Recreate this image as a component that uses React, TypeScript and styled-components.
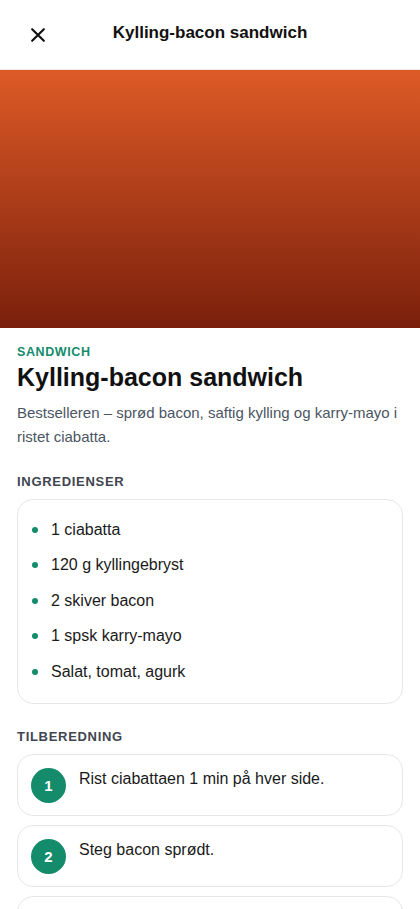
import styled, { createGlobalStyle } from 'styled-components';

const GlobalStyle = createGlobalStyle`
  * { box-sizing: border-box; }
  body {
    margin: 0;
    background: #ffffff;
    font-family: 'Liberation Sans', Arial, sans-serif;
    color: #111111;
  }
`;

const ingredients = [
  '1 ciabatta',
  '120 g kyllingebryst',
  '2 skiver bacon',
  '1 spsk karry-mayo',
  'Salat, tomat, agurk',
];

const steps = [
  'Rist ciabattaen 1 min på hver side.',
  'Steg bacon sprødt.',
  'Stek kyllingen gjennom.',
];

const App = () => {
  return (
    <Page>
      <GlobalStyle />
      <Header>
        <CloseButton aria-label='Lukk'>
          <svg width='20' height='20' viewBox='0 0 24 24' fill='none' stroke='#111' strokeWidth='2.6' strokeLinecap='round'>
            <path d='M5 5l14 14M19 5L5 19' />
          </svg>
        </CloseButton>
        <HeaderTitle>Kylling-bacon sandwich</HeaderTitle>
      </Header>
      <Hero />
      <Content>
        <Category>SANDWICH</Category>
        <Title>Kylling-bacon sandwich</Title>
        <Description>
          Bestselleren – sprød bacon, saftig kylling og karry-mayo i ristet ciabatta.
        </Description>

        <SectionLabel>INGREDIENSER</SectionLabel>
        <Card>
          <IngredientList>
            {ingredients.map((item) => (
              <Ingredient key={item}>
                <Bullet />
                <span>{item}</span>
              </Ingredient>
            ))}
          </IngredientList>
        </Card>

        <SectionLabel>TILBEREDNING</SectionLabel>
        <Steps>
          {steps.map((text, i) => (
            <StepCard key={text}>
              <StepNumber>{i + 1}</StepNumber>
              <StepText>{text}</StepText>
            </StepCard>
          ))}
        </Steps>
      </Content>
    </Page>
  );
};

export default App;

const Page = styled.div`
  width: 420px;
  height: 909px;
  overflow: hidden;
  background: #fff;
`;

const Header = styled.header`
  position: relative;
  height: 70px;
  display: flex;
  align-items: center;
  justify-content: center;
  border-bottom: 1px solid #ececec;
`;

const CloseButton = styled.button`
  position: absolute;
  left: 22px;
  top: 19px;
  width: 32px;
  height: 32px;
  padding: 0;
  border: none;
  background: none;
  display: flex;
  align-items: center;
  justify-content: center;
`;

const HeaderTitle = styled.h1`
  margin: 0 0 4px;
  font-size: 17px;
  font-weight: 700;
  color: #111;
`;

const Hero = styled.div`
  height: 258px;
  background: linear-gradient(180deg, #dd5a26 0%, #a73a18 55%, #7a1f0b 100%);
`;

const Content = styled.main`
  padding: 15px 17px 0 17px;
`;

const Category = styled.div`
  font-size: 12.5px;
  font-weight: 700;
  letter-spacing: 0.6px;
  color: #148c6c;
  line-height: 18px;
`;

const Title = styled.h2`
  margin: 0;
  font-size: 25px;
  font-weight: 700;
  line-height: 32px;
  color: #111;
`;

const Description = styled.p`
  margin: 8px 0 0;
  font-size: 15px;
  line-height: 24px;
  color: #4b5563;
`;

const SectionLabel = styled.h3`
  margin: 24px 0 8px;
  font-size: 13px;
  font-weight: 700;
  letter-spacing: 0.7px;
  line-height: 18px;
  color: #3f4650;
`;

const Card = styled.div`
  border: 1px solid #e6e7ea;
  border-radius: 16px;
  background: #fff;
`;

const IngredientList = styled.ul`
  list-style: none;
  margin: 0;
  padding: 12px 16px 13px 14px;
`;

const Ingredient = styled.li`
  display: flex;
  align-items: center;
  gap: 13px;
  height: 35.5px;
  font-size: 16px;
  color: #1a1a1a;
`;

const Bullet = styled.span`
  width: 6px;
  height: 6px;
  border-radius: 50%;
  background: #148c6c;
  flex-shrink: 0;
`;

const Steps = styled.div`
  display: flex;
  flex-direction: column;
  gap: 9px;
`;

const StepCard = styled(Card)`
  display: flex;
  align-items: flex-start;
  gap: 13px;
  padding: 13px 16px 12px 13px;
  min-height: 62px;
`;

const StepNumber = styled.div`
  width: 35px;
  height: 35px;
  border-radius: 50%;
  background: #148c6c;
  color: #fff;
  font-size: 15px;
  font-weight: 700;
  display: flex;
  align-items: center;
  justify-content: center;
  flex-shrink: 0;
`;

const StepText = styled.p`
  margin: 0;
  font-size: 16px;
  line-height: 22px;
  color: #1a1a1a;
`;
